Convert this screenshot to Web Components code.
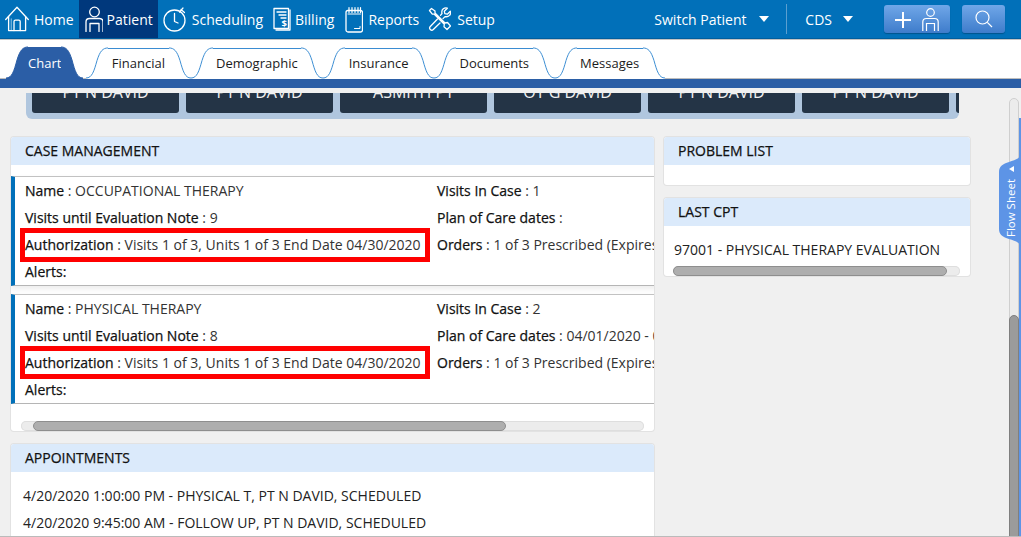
<!DOCTYPE html>
<html lang="en">
<head>
<meta charset="utf-8">
<title>Chart</title>
<style>
  html, body { margin: 0; height: 100%; overflow: hidden; }
  body { background: #f0f0f0; font-family: "Open Sans", "Liberation Sans", sans-serif; color: #222; }
  app-shell { height: 537px; }
</style>
</head>
<body>
<app-shell>
  <top-nav slot="nav">
    <nav-item icon="home">Home</nav-item>
    <nav-item icon="patient" active>Patient</nav-item>
    <nav-item icon="clock">Scheduling</nav-item>
    <nav-item icon="billing">Billing</nav-item>
    <nav-item icon="reports" style="padding:0 4px 0 6px">Reports</nav-item>
    <nav-item icon="setup">Setup</nav-item>
  </top-nav>
  <chart-tabs slot="tabs">
    <chart-tab active style="margin-right:3px">Chart</chart-tab>
    <chart-tab>Financial</chart-tab>
    <chart-tab>Demographic</chart-tab>
    <chart-tab>Insurance</chart-tab>
    <chart-tab>Documents</chart-tab>
    <chart-tab>Messages</chart-tab>
  </chart-tabs>

  <patient-strip>
    <strip-button>PT N DAVID</strip-button>
    <strip-button>PT N DAVID</strip-button>
    <strip-button>ASMITH PT</strip-button>
    <strip-button>OT G DAVID</strip-button>
    <strip-button>PT N DAVID</strip-button>
    <strip-button>PT N DAVID</strip-button>
    <strip-button></strip-button>
  </patient-strip>

  <dash-grid>
    <div slot="left">
      <dash-panel heading="CASE MANAGEMENT" class="cases">
        <case-list>
          <case-row>
            <case-line label="Name">OCCUPATIONAL THERAPY</case-line>
            <case-line label="Visits In Case">1</case-line>
            <case-line label="Visits until Evaluation Note">9</case-line>
            <case-line label="Plan of Care dates"></case-line>
            <case-line label="Authorization" marked="34">Visits 1 of 3, Units 1 of 3 End Date 04/30/2020</case-line>
            <case-line label="Orders">1 of 3 Prescribed (Expires 04/30/2020)</case-line>
            <case-line label="Alerts" tight></case-line>
          </case-row>
          <case-row>
            <case-line label="Name">PHYSICAL THERAPY</case-line>
            <case-line label="Visits In Case">2</case-line>
            <case-line label="Visits until Evaluation Note">8</case-line>
            <case-line label="Plan of Care dates">04/01/2020 - 04/30/2020</case-line>
            <case-line label="Authorization" marked="33">Visits 1 of 3, Units 1 of 3 End Date 04/30/2020</case-line>
            <case-line label="Orders">1 of 3 Prescribed (Expires 04/30/2020)</case-line>
            <case-line label="Alerts" tight></case-line>
          </case-row>
        </case-list>
        <h-scroll inset="10" offset="12" size="473" style="margin-top:17px"></h-scroll>
      </dash-panel>
      <dash-panel heading="APPOINTMENTS" style="margin-top:13px">
        <plain-lines top="10">
          <div>4/20/2020 1:00:00 PM - PHYSICAL T, PT N DAVID, SCHEDULED</div>
          <div>4/20/2020 9:45:00 AM - FOLLOW UP, PT N DAVID, SCHEDULED</div>
          <div>4/20/2020 8:30:00 AM - FOLLOW UP, PT N DAVID, SCHEDULED</div>
        </plain-lines>
      </dash-panel>
    </div>
    <div slot="right">
      <dash-panel heading="PROBLEM LIST"><div style="height:20px"></div></dash-panel>
      <dash-panel heading="LAST CPT" style="margin-top:13px">
        <plain-lines top="10" left="10"><div>97001 - PHYSICAL THERAPY EVALUATION</div></plain-lines>
        <h-scroll inset="9" offset="0" size="274" style="margin-top:3px;margin-right:10px"></h-scroll>
      </dash-panel>
    </div>
  </dash-grid>

  <flow-sheet slot="overlay">Flow Sheet</flow-sheet>
</app-shell>

<script>
(() => {
  const ICONS = {
    home: { w: 24, h: 26, gap: 5, body: `
      <path d="M.7 13.5 12 1.2l11.3 12.3"/>
      <path d="M3.6 10.6V24.6h17V10.6"/>
      <path d="M9 24.6V15.6q0-1.4 1.4-1.4h3.4q1.4 0 1.4 1.4v9"/>
      <path d="M6.3 24V13" opacity=".45"/>` },
    patient: { w: 18, h: 26, gap: 4, body: `
      <circle cx="9.500" cy="6" r="4.800"/>
      <path d="M1 25.500V16q0-3.500 3.500-3.500h10Q18 12.500 18 16v9.500"/>
      <path d="M5 25.500V17.500h9v8"/>` },
    clock: { w: 23, h: 26, gap: 6, body: `
      <circle cx="11.500" cy="14.500" r="10.500"/>
      <path d="M11.500 7.500v8l3.500 1.500"/>
      <path d="M18 3.500l3.500 3M20 2l-3.500 4" stroke-width="1.200"/>` },
    billing: { w: 18, h: 24, gap: 4, body: `
      <path d="M1 1.500h14.500v20H1z"/>
      <path d="M17 3v20H3"/>
      <path d="M4 5h9M6 8h7M8 11h5" stroke-width="1.300"/>
      <text x="8.500" y="19.500" font-size="9.500" font-weight="700" fill="#fff" stroke="none" font-family="Open Sans">$</text>` },
    reports: { w: 18, h: 27, gap: 5, body: `
      <rect x="1" y="4.500" width="16.500" height="21.500" rx="2"/>
      <path d="M3 8h12.500" stroke-width="1"/>
      <path d="M4 1.500v5M7 1.500v5M10 1.500v5M13 1.500v5M15.500 1.500v5" stroke-width="1.200"/>
      <path d="M9.500 22.500h5.500v-2" stroke-width="1"/>` },
    setup: { w: 23, h: 24, gap: 6, body: `
      <path d="M1.500 3.500 3.500 1.500 7 4v2l10 10 2.500-.500 3 3.500-3.500 3.500-3-2.700.300-2.600L6.300 7.200H4.300z"/>
      <path d="M12.500 8.300 14 6.500q-.800-3 1.300-4.700 1.800-1.300 4-.600l-3 3 .500 2.500 2.500.500 3-3q.800 2.400-.800 4.200-1.800 1.800-4.500 1.200l-2 2"/>
      <path d="M9.500 12 2.300 19.500q-1.500 1.500 0 3t3 0L12 16"/>` },
  };

  class NavIcon extends HTMLElement {
    connectedCallback() {
      const icon = ICONS[this.getAttribute("name")];
      const root = this.shadowRoot ?? this.attachShadow({ mode: "open" });
      root.innerHTML = `
        <style>
          :host { display: block; line-height: 0; }
          svg { fill: none; stroke: #fff; stroke-width: 1.300; stroke-linejoin: round; stroke-linecap: round; }
        </style>
        <svg width="${icon.w}" height="${icon.h}" viewBox="0 0 ${icon.w} ${icon.h}" style="margin-right:${icon.gap}px">${icon.body}</svg>`;
    }
  }

  class AppShell extends HTMLElement {
    constructor() {
      super();
      this.attachShadow({ mode: "open" });
      this.shadowRoot.innerHTML = `
        <style>
          :host { display: flex; flex-direction: column; position: relative; overflow: hidden; box-sizing: border-box; border-bottom: 1px solid #bbb; }
          .band { height: 9px; background: #2b5ea6; flex: none; }
          .body { flex: 1; min-height: 0; display: flex; padding-top: 5px; }
          .view { flex: 1; min-width: 0; overflow: hidden; }
          .rail { width: 10px; margin: 5px 2px 0 0; display: flex; }
        </style>
        <slot name="nav"></slot>
        <slot name="tabs"></slot>
        <div class="band"></div>
        <div class="body">
          <div class="view"><slot></slot></div>
          <div class="rail"><v-scroll></v-scroll></div>
        </div>
        <slot name="overlay"></slot>
      `;
    }
  }

  class TopNav extends HTMLElement {
    constructor() {
      super();
      this.attachShadow({ mode: "open" });
      this.shadowRoot.innerHTML = `
        <style>
          :host { display: flex; flex: none; height: 39px; background: #0170b9; color: #fff; font-size: 14px; box-shadow: inset 0 -1px #005e9e; }
          .items { display: flex; flex: 1; }
          .right { display: flex; align-items: center; height: 38px; }
          .switch { width: 92px; white-space: nowrap; margin-right: 13px; }
          .caret { width: 0; height: 0; border: 5.500px solid transparent; border-top: 6px solid #fff; border-bottom: 0; }
          .sep { width: 1px; height: 30px; background: #5b9fd0; margin: 0 18px 0 17px; }
          .cds { margin-right: 11px; }
          .btn { height: 28px; box-sizing: border-box; border-radius: 3px; display: flex; align-items: center; justify-content: center; background: linear-gradient(#70a7e8, #3e7ccb); box-shadow: 0 1px 1px #00548d; }
          .add { width: 66px; margin-left: 31px; gap: 11px; padding-top: 1px; }
          .find { width: 43px; margin: 0 16px 0 12px; }
        </style>
        <div class="items"><slot></slot></div>
        <div class="right">
          <span class="switch">Switch Patient</span><span class="caret"></span>
          <span class="sep"></span>
          <span class="cds">CDS</span><span class="caret"></span>
          <span class="btn add">
            <svg width="16" height="16" viewBox="0 0 16 16" fill="none" stroke="#fff" stroke-width="2"><path d="M8 0v16M0 8h16"/></svg>
            <svg width="17" height="23" viewBox="0 0 17 23" fill="none" stroke="#fff" stroke-width="1.200"><circle cx="8.500" cy="4.500" r="3.800"/><path d="M.8 23v-9q0-3.500 3.500-3.500h8.400q3.500 0 3.500 3.500v9M4.500 23v-7.500h8V23"/></svg>
          </span>
          <span class="btn find">
            <svg width="18" height="18" viewBox="0 0 18 18" fill="none" stroke="#fff" stroke-width="1.200"><circle cx="7.500" cy="7.500" r="6.500"/><path d="M12.300 12.300 17 17"/></svg>
          </span>
        </div>
      `;
    }
  }

  class NavItem extends HTMLElement {
    constructor() {
      super();
      this.attachShadow({ mode: "open" });
    }

    connectedCallback() {
      this.shadowRoot.innerHTML = `
        <style>
          :host { display: flex; align-items: center; height: 38px; padding: 0 5px; white-space: nowrap; }
          :host([active]) { background: #00387c; padding: 0 5px 0 6px; }
        </style>
        <nav-icon name="${this.getAttribute("icon")}"></nav-icon><slot></slot>
      `;
    }
  }

  class ChartTabs extends HTMLElement {
    constructor() {
      super();
      this.attachShadow({ mode: "open" });
      this.shadowRoot.innerHTML = `
        <style>
          :host { display: flex; flex: none; height: 40px; box-sizing: border-box; padding: 7px 0 0 6px; background: #fff; border-top: 1px solid #c4c4c4; box-shadow: inset 0 -1px #bdbdbd; }
        </style>
        <slot></slot>
      `;
    }
  }

  class ChartTab extends HTMLElement {
    constructor() {
      super();
      this.attachShadow({ mode: "open" });
    }

    connectedCallback() {
      const active = this.hasAttribute("active");
      const fill = active ? "#2b5ea6" : "#fff";
      const line = active ? "#2b5ea6" : "#3a8cd2";
      this.shadowRoot.innerHTML = `
        <style>
          :host { display: flex; height: 32px; font-size: 13px; color: #1c1c1c; }
          :host([active]) { color: #fff; height: 33px; margin-top: -1px; }
          svg { display: block; flex: none; width: 22px; height: 100%; }
          .mid { padding: 0 3.500px 1px; display: flex; align-items: center; border-top: 1px solid ${line}; background: ${fill}; white-space: nowrap; box-sizing: border-box; height: calc(100% - .500px); margin-top: .500px; }
          :host([active]) .mid { padding: 0 0 1px; }
        </style>
        <svg viewBox="0 0 22 33" preserveAspectRatio="none">
          <path d="M0 32C6 32 8 25 11 14 14 4 17 1 22 1V33H0Z" fill="${fill}"/>
          <path d="M0 32C6 32 8 25 11 14 14 4 17 1 22 1" fill="none" stroke="${line}"/>
        </svg>
        <span class="mid"><slot></slot></span>
        <svg viewBox="0 0 22 33" preserveAspectRatio="none">
          <path d="M0 1C5 1 8 4 11 14 14 25 16 32 22 32V33H0Z" fill="${fill}"/>
          <path d="M0 1C5 1 8 4 11 14 14 25 16 32 22 32" fill="none" stroke="${line}"/>
        </svg>
      `;
    }
  }

  class PatientStrip extends HTMLElement {
    constructor() {
      super();
      this.attachShadow({ mode: "open" });
      this.shadowRoot.innerHTML = `
        <style>
          :host { display: flex; gap: 7px; box-sizing: border-box; width: 933px; height: 46px; margin: -20px 0 0 26px; padding: 0 0 6px 6px; background: #b0c6de; border-radius: 0 0 6px 6px; overflow: hidden; }
        </style>
        <slot></slot>
      `;
    }
  }

  class StripButton extends HTMLElement {
    constructor() {
      super();
      this.attachShadow({ mode: "open" });
      this.shadowRoot.innerHTML = `
        <style>
          :host { flex: none; width: 147px; height: 40px; box-sizing: border-box; padding-bottom: 11px; display: flex; align-items: flex-end; justify-content: center; background: #243446; color: #f2f2f2; font-size: 16px; line-height: 20px; border-radius: 3px; }
        </style>
        <slot></slot>
      `;
    }
  }

  class DashGrid extends HTMLElement {
    constructor() {
      super();
      this.attachShadow({ mode: "open" });
      this.shadowRoot.innerHTML = `
        <style>
          :host { display: grid; grid-template-columns: 645px 308px; column-gap: 8px; padding: 17px 0 0 10px; align-items: start; }
        </style>
        <slot name="left"></slot>
        <slot name="right"></slot>
      `;
    }
  }

  class DashPanel extends HTMLElement {
    static get observedAttributes() {
      return ["heading"];
    }

    constructor() {
      super();
      this.attachShadow({ mode: "open" });
      this.shadowRoot.innerHTML = `
        <style>
          :host { display: block; background: #fff; border-radius: 3px; box-sizing: border-box; box-shadow: 0 0 0 1px #e2e2e2; margin: 1px; overflow: hidden; }
          h2 { margin: 0; height: 28px; line-height: 28px; padding-left: 14px; background: #dbeafb; font-size: 14px; font-weight: 400; -webkit-text-stroke: .25px #111; color: #111; }
        </style>
        <h2 part="heading"></h2>
        <slot></slot>
      `;
      this._heading = this.shadowRoot.querySelector("h2");
    }

    attributeChangedCallback() {
      this._heading.textContent = this.getAttribute("heading") ?? "";
    }
  }

  class CaseList extends HTMLElement {
    constructor() {
      super();
      this.attachShadow({ mode: "open" });
      this.shadowRoot.innerHTML = `
        <style>
          :host { display: flex; flex-direction: column; gap: 8px; padding-top: 11px; overflow: hidden; }
        </style>
        <slot></slot>
      `;
    }
  }

  class CaseRow extends HTMLElement {
    constructor() {
      super();
      this.attachShadow({ mode: "open" });
      this.shadowRoot.innerHTML = `
        <style>
          :host { display: grid; grid-template-columns: 412px 400px; grid-auto-rows: 27px; width: 830px; padding-left: 10px; box-sizing: border-box; border-left: 4px solid #0170b9; border-top: 1px solid #c2c2c2; border-bottom: 1px solid #b5b5b5; box-shadow: 0 3px 6px rgba(0,0,0,.08); height: 110px; }
        </style>
        <slot></slot>
      `;
    }
  }

  class CaseLine extends HTMLElement {
    constructor() {
      super();
      this.attachShadow({ mode: "open" });
    }

    connectedCallback() {
      const tight = this.hasAttribute("tight");
      const marked = this.getAttribute("marked");
      this.shadowRoot.innerHTML = `
        <style>
          :host { display: block; position: relative; font-size: 14px; line-height: 27px; color: #333; white-space: nowrap; }
          b { font-weight: 400; color: #111; -webkit-text-stroke: .25px #111; }
          .mark { position: absolute; left: -5px; top: -3px; width: 410px; box-sizing: border-box; border: 5px solid #f00; }
        </style>
        <b>${this.getAttribute("label")}${tight ? ":" : ""}</b>${tight ? "" : " :"} <slot></slot>
        ${marked ? `<span class="mark" style="height:${marked}px"></span>` : ""}
      `;
    }
  }

  class PlainLines extends HTMLElement {
    constructor() {
      super();
      this.attachShadow({ mode: "open" });
    }

    connectedCallback() {
      const top = this.getAttribute("top") ?? "0";
      const left = this.getAttribute("left") ?? "12";
      this.shadowRoot.innerHTML = `
        <style>
          :host { display: block; padding: ${top}px 0 0 ${left}px; font-size: 14px; line-height: 27px; color: #222; white-space: nowrap; }
        </style>
        <slot></slot>
      `;
    }
  }

  class HScroll extends HTMLElement {
    constructor() {
      super();
      this.attachShadow({ mode: "open" });
    }

    connectedCallback() {
      const inset = this.getAttribute("inset");
      this.shadowRoot.innerHTML = `
        <style>
          :host { display: block; height: 10px; margin: 0 ${inset}px; background: #ececec; border-radius: 5px; box-shadow: inset 0 0 0 1px #dedede; }
          div { height: 10px; box-sizing: border-box; width: ${this.getAttribute("size")}px; margin-left: ${this.getAttribute("offset")}px; background: #aeaeae; border: 1px solid #8e8e8e; border-radius: 5px; }
        </style>
        <div></div>
      `;
    }
  }

  class VScroll extends HTMLElement {
    constructor() {
      super();
      this.attachShadow({ mode: "open" });
      this.shadowRoot.innerHTML = `
        <style>
          :host { display: block; width: 10px; box-sizing: border-box; background: #ececec; border: 1px solid #cfcfcf; border-radius: 5px 5px 0 0; padding-top: 216px; }
          div { height: 240px; margin: 0 -1px; background: #9b9b9b; border: 1px solid #7f7f7f; border-radius: 5px 5px 0 0; }
        </style>
        <div></div>
      `;
    }
  }

  class FlowSheet extends HTMLElement {
    constructor() {
      super();
      this.attachShadow({ mode: "open" });
      this.shadowRoot.innerHTML = `
        <style>
          :host { position: absolute; top: 118px; right: 0; bottom: 0; width: 22px; color: #fff; font-size: 11.500px; }
          .edge { position: absolute; top: 0; bottom: 0; right: 0; width: 2px; background: #5d94e6; }
          .tab { position: absolute; top: 35px; left: 0; width: 22px; height: 95px; }
          svg { position: absolute; inset: 0; }
          .arrow { position: absolute; top: 13px; left: 10px; width: 0; height: 0; border: 3.500px solid transparent; border-right: 5px solid #fff; border-left: 0; }
          .label { position: absolute; top: 26px; left: 4px; writing-mode: vertical-rl; transform: rotate(180deg); line-height: 16px; white-space: nowrap; }
        </style>
        <div class="edge"></div>
        <div class="tab">
          <svg width="22" height="95" viewBox="0 0 22 95"><path d="M22 0C22 5 17 7 10 9 4 11 0 13 0 19V76C0 82 4 84 10 86 17 88 22 90 22 95Z" fill="#5d94e6"/></svg>
          <span class="arrow"></span>
          <span class="label"><slot></slot></span>
        </div>
      `;
    }
  }

  customElements.define("nav-icon", NavIcon);
  customElements.define("app-shell", AppShell);
  customElements.define("top-nav", TopNav);
  customElements.define("nav-item", NavItem);
  customElements.define("chart-tabs", ChartTabs);
  customElements.define("chart-tab", ChartTab);
  customElements.define("patient-strip", PatientStrip);
  customElements.define("strip-button", StripButton);
  customElements.define("dash-grid", DashGrid);
  customElements.define("dash-panel", DashPanel);
  customElements.define("case-list", CaseList);
  customElements.define("case-row", CaseRow);
  customElements.define("case-line", CaseLine);
  customElements.define("plain-lines", PlainLines);
  customElements.define("h-scroll", HScroll);
  customElements.define("v-scroll", VScroll);
  customElements.define("flow-sheet", FlowSheet);
})();
</script>
</body>
</html>
